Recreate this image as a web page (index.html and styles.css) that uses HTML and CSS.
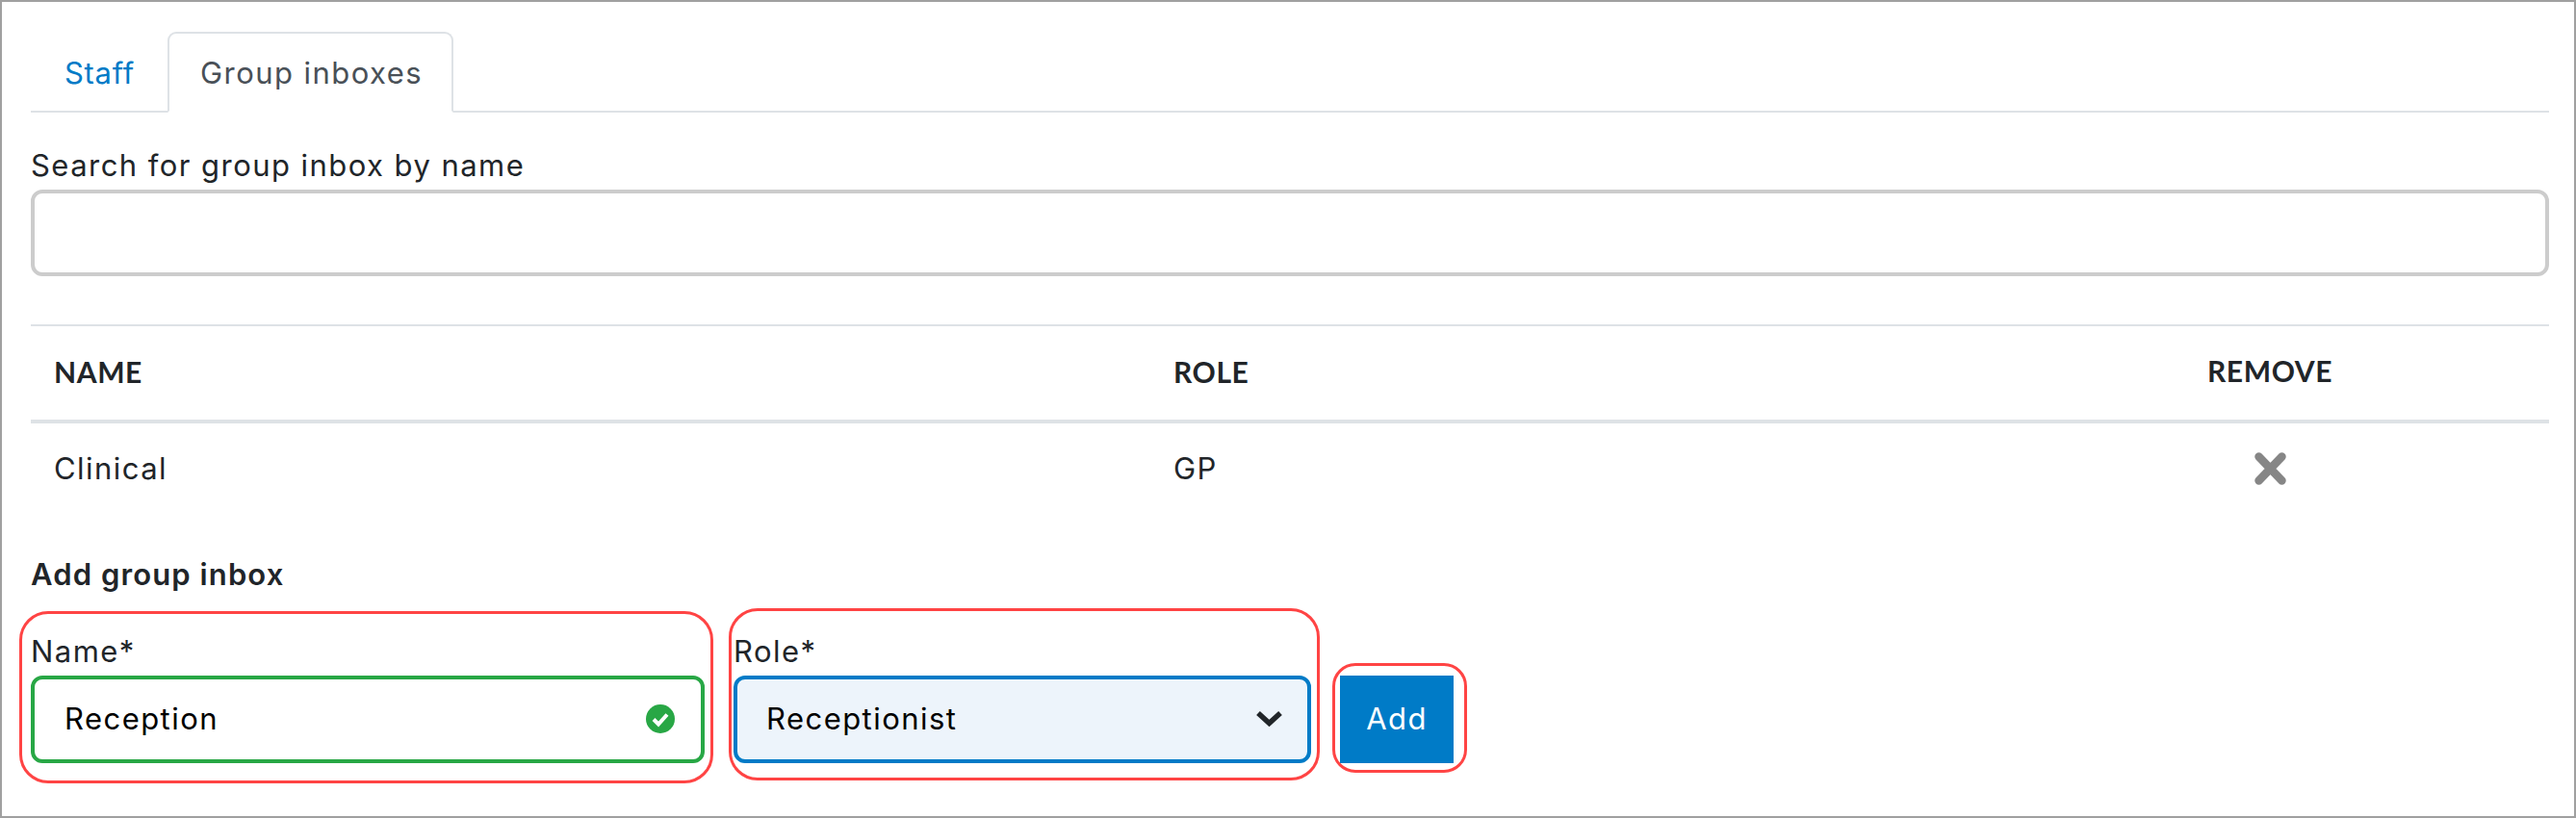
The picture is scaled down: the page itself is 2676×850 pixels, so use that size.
FILE: index.html
```html
<!DOCTYPE html>
<html lang="en">
<head>
<meta charset="utf-8">
<title>Group inboxes</title>
<link rel="stylesheet" href="styles.css">
</head>
<body>
<main class="frame">
  <nav class="tabs">
    <a class="tab tab-link" href="#">Staff</a>
    <a class="tab tab-active" href="#">Group inboxes</a>
  </nav>
  <div class="search">
    <label class="label" for="search">Search for group inbox by name</label>
    <input class="input input-search" id="search" type="text">
  </div>
  <table class="table">
    <colgroup><col class="col-name"><col class="col-role"><col class="col-remove"></colgroup>
    <thead>
      <tr><th>NAME</th><th>ROLE</th><th class="center">REMOVE</th></tr>
    </thead>
    <tbody>
      <tr>
        <td>Clinical</td>
        <td>GP</td>
        <td class="center">
          <svg class="icon-x" viewBox="0 0 33 34" aria-hidden="true"><path d="M4.5 4.5 28.5 29.5M28.5 4.5 4.5 29.5" fill="none" stroke="#868686" stroke-width="8.5" stroke-linecap="round"/></svg>
        </td>
      </tr>
    </tbody>
  </table>
  <h2 class="add-title">Add group inbox</h2>
  <form class="add-form">
    <div class="field field-name">
      <label class="label" for="name">Name*</label>
      <div class="control control-valid">
        <span class="value">Reception</span>
        <svg class="icon-check" viewBox="0 0 30 30" aria-hidden="true"><circle cx="15" cy="15" r="15" fill="#28a745"/><path d="M8 15.5 13 20.5 22 10.5" fill="none" stroke="#fff" stroke-width="4"/></svg>
      </div>
      <span class="mark mark-name"></span>
    </div>
    <div class="field field-role">
      <label class="label" for="role">Role*</label>
      <div class="control control-select">
        <span class="value">Receptionist</span>
        <svg class="icon-chevron" viewBox="0 0 29 17" aria-hidden="true"><path d="M3 3 14.5 13.5 26 3" fill="none" stroke="#212529" stroke-width="5.5"/></svg>
      </div>
      <span class="mark mark-role"></span>
    </div>
    <div class="action">
      <button class="btn" type="button">Add</button>
      <span class="mark mark-add"></span>
    </div>
  </form>
</main>
</body>
</html>
```
FILE: styles.css
```css
* { box-sizing: border-box; }
html, body { margin: 0; padding: 0; background: #fff; }
body { font-family: "Inter", "Open Sans", sans-serif; color: #212529; font-size: 31px; letter-spacing: 1.45px; }

.frame {
  width: 2676px;
  height: 850px;
  border: 2px solid #a0a0a0;
  padding: 31px 26px 0 30px;
  overflow: hidden;
}

.tabs {
  display: flex;
  height: 84px;
  border-bottom: 2px solid #dee2e6;
}
.tab {
  display: block;
  height: 84px;
  padding-top: 19px;
  line-height: 44px;
  text-decoration: none;
  border: 2px solid transparent;
  border-radius: 9px 9px 0 0;
}
.tab-link { width: 142px; padding-left: 33px; color: #007bc7; letter-spacing: 0.7px; }
.tab-active { width: 297px; padding-left: 32px; color: #495057; border-color: #dee2e6; border-bottom-color: #fff; background: #fff; }

.search { padding-top: 30px; }
.label { display: block; line-height: 50px; height: 50px; }
.input-search {
  display: block;
  width: 100%;
  height: 90px;
  border: 4px solid #ccc;
  border-radius: 12px;
  background: #fff;
}

.table {
  width: 2616px;
  margin-top: 50px;
  border-collapse: collapse;
  table-layout: fixed;
}
.col-name { width: 1163px; }
.col-role { width: 873px; }
.col-remove { width: 580px; }
.table th {
  height: 100px;
  padding: 0 0 3px 24px;
  text-align: left;
  font-family: "Lato", sans-serif;
  font-weight: 700;
  font-size: 30px;
  letter-spacing: 0.6px;
  border-top: 2px solid #dee2e6;
  border-bottom: 4px solid #dee2e6;
}
.table .center { text-align: center; padding-left: 0; padding-bottom: 5px; }
.table td { height: 96px; padding: 0 0 2px 24px; }
.table td.center { padding: 0; }
.icon-x { display: block; width: 33px; height: 34px; margin: 0 auto; }

.add-title { margin: 0; font-size: 31px; font-weight: 600; letter-spacing: 1.1px; line-height: 50px; padding-top: 38px; height: 88px; }

.add-form { display: flex; gap: 30px; margin-top: 30px; align-items: flex-end; }
.field { position: relative; }
.field-name { width: 700px; }
.field-role { width: 600px; }
.control {
  display: flex;
  align-items: center;
  justify-content: space-between;
  height: 91px;
  border: 4px solid;
  border-radius: 12px;
  padding: 0 30px 2px 31px;
}
.control-valid { border-color: #28a745; background: #fff; padding-right: 27px; }
.control-select { border-color: #007bc7; background: #edf4fb; padding-left: 30px; padding-right: 25px; }
.value { color: #000; }
.icon-check { width: 30px; height: 30px; display: block; }
.icon-chevron { width: 29px; height: 17px; display: block; }

.action { position: relative; }
.btn {
  display: block;
  width: 118px;
  height: 91px;
  border: 0;
  padding: 0 0 2px;
  background: #007bc7;
  color: #fff;
  font: 31px "Inter", sans-serif;
  letter-spacing: 1.4px;
}

.mark { position: absolute; border: 3px solid #ff4444; border-radius: 30px; pointer-events: none; }
.mark-name { left: -12px; right: -9px; top: -17px; bottom: -21px; }
.mark-role { left: -5px; right: -9px; top: -20px; bottom: -18px; }
.mark-add { left: -8px; right: -14px; top: -13px; bottom: -10px; border-radius: 24px; }
```
